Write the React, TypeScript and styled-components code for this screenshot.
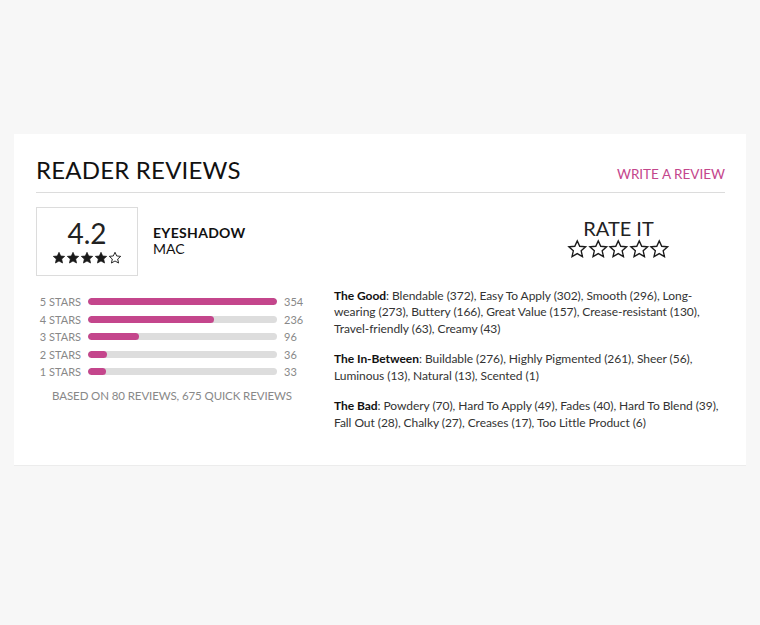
import styled, { createGlobalStyle } from 'styled-components'

const GlobalStyle = createGlobalStyle`
  html, body {
    margin: 0;
    padding: 0;
    background: #f7f7f7;
    font-family: Lato, "Liberation Sans", sans-serif;
  }
`

const Page = styled.div`
  width: 760px;
  height: 625px;
  padding-top: 134px;
  box-sizing: border-box;
`

const Card = styled.section`
  margin: 0 14px;
  background: #fff;
  border-bottom: 1px solid #ececec;
  padding: 22px 21px 36px 22px;
  height: 332px;
  box-sizing: border-box;
`

const Header = styled.div`
  display: flex;
  justify-content: space-between;
  align-items: flex-end;
  border-bottom: 1px solid #dcdcdc;
  padding-bottom: 8px;
`

const Title = styled.h2`
  margin: 0;
  font-size: 24px;
  font-weight: 400;
  color: #111;
  letter-spacing: 0.2px;
  line-height: 28px;
`

const WriteLink = styled.a`
  color: #c4468c;
  font-size: 13.5px;
  text-decoration: none;
  margin-bottom: 2px;
  cursor: pointer;
`

const Body = styled.div`
  display: grid;
  grid-template-columns: 276px 1fr;
  column-gap: 22px;
  padding-top: 14px;
`

const Summary = styled.div`
  display: flex;
  align-items: center;
  gap: 15px;
`

const ScoreBox = styled.div`
  width: 100px;
  height: 67px;
  border: 1px solid #dcdcdc;
  display: flex;
  flex-direction: column;
  align-items: center;
  justify-content: center;
  gap: 3px;
`

const Score = styled.div`
  font-size: 28px;
  line-height: 30px;
  color: #222;
  font-weight: 400;
`

const StarRow = styled.div<{ $gap?: number }>`
  display: flex;
  gap: ${p => p.$gap ?? 0}px;
`

const Product = styled.div`
  display: flex;
  flex-direction: column;
  font-size: 14px;
  line-height: 16px;
  color: #111;
  margin-top: -2px;
`

const ProductName = styled.span`
  font-weight: 700;
  letter-spacing: 0.3px;
`

const Bars = styled.div`
  display: flex;
  flex-direction: column;
  gap: 4px;
  margin-top: 19px;
`

const BarRow = styled.div`
  display: grid;
  grid-template-columns: 45px 189px 30px;
  column-gap: 7px;
  align-items: center;
  height: 13.5px;
  font-size: 11px;
  color: #888;
`

const BarLabel = styled.span`
  text-align: right;
`

const Track = styled.div`
  height: 7px;
  border-radius: 4px;
  background: #dddddd;
  overflow: hidden;
`

const Fill = styled.div`
  height: 100%;
  border-radius: 4px;
  background: #c4468c;
`

const Based = styled.div`
  margin-top: 10px;
  text-align: center;
  font-size: 11.5px;
  letter-spacing: -0.1px;
  color: #888;
  width: 272px;
`

const Right = styled.div`
  display: flex;
  flex-direction: column;
`

const RateIt = styled.div`
  align-self: center;
  display: flex;
  flex-direction: column;
  align-items: center;
  margin-top: 10px;
  margin-left: 178px;
`

const RateTitle = styled.div`
  font-size: 20px;
  line-height: 22px;
  color: #222;
`

const Attrs = styled.div`
  margin-top: 28px;
  display: flex;
  flex-direction: column;
  gap: 14px;
`

const Attr = styled.p`
  margin: 0;
  font-size: 12px;
  line-height: 16.5px;
  letter-spacing: -0.05px;
  color: #333;
`

const AttrLabel = styled.b`
  color: #111;
  font-weight: 700;
`

const STAR = 'M12 2.2l2.9 6.3 6.9.7-5.2 4.6 1.5 6.8L12 17.1l-6.1 3.5 1.5-6.8L2.2 9.2l6.9-.7z'

function Star({ size, filled }: { size: number; filled?: boolean }) {
  return (
    <svg width={size} height={size} viewBox="0 0 24 24">
      <path
        d={STAR}
        fill={filled ? '#1a1a1a' : 'none'}
        stroke="#1a1a1a"
        strokeWidth={filled ? 1.2 : 1.6}
        strokeLinejoin="miter"
      />
    </svg>
  )
}

const ratings = [
  { label: '5 STARS', count: 354 },
  { label: '4 STARS', count: 236 },
  { label: '3 STARS', count: 96 },
  { label: '2 STARS', count: 36 },
  { label: '1 STARS', count: 33 },
]

const attributes = [
  {
    label: 'The Good',
    text: 'Blendable (372), Easy To Apply (302), Smooth (296), Long-wearing (273), Buttery (166), Great Value (157), Crease-resistant (130), Travel-friendly (63), Creamy (43)',
  },
  {
    label: 'The In-Between',
    text: 'Buildable (276), Highly Pigmented (261), Sheer (56), Luminous (13), Natural (13), Scented (1)',
  },
  {
    label: 'The Bad',
    text: 'Powdery (70), Hard To Apply (49), Fades (40), Hard To Blend (39), Fall Out (28), Chalky (27), Creases (17), Too Little Product (6)',
  },
]

export default function App() {
  const max = Math.max(...ratings.map(r => r.count))
  return (
    <Page>
      <GlobalStyle />
      <Card>
        <Header>
          <Title>READER REVIEWS</Title>
          <WriteLink>WRITE A REVIEW</WriteLink>
        </Header>
        <Body>
          <div>
            <Summary>
              <ScoreBox>
                <Score>4.2</Score>
                <StarRow $gap={-1}>
                  {[0, 1, 2, 3, 4].map(i => (
                    <Star key={i} size={14} filled={i < 4} />
                  ))}
                </StarRow>
              </ScoreBox>
              <Product>
                <ProductName>EYESHADOW</ProductName>
                <span>MAC</span>
              </Product>
            </Summary>
            <Bars>
              {ratings.map(r => (
                <BarRow key={r.label}>
                  <BarLabel>{r.label}</BarLabel>
                  <Track>
                    <Fill style={{ width: `${(r.count / max) * 100}%` }} />
                  </Track>
                  <span>{r.count}</span>
                </BarRow>
              ))}
            </Bars>
            <Based>BASED ON 80 REVIEWS, 675 QUICK REVIEWS</Based>
          </div>
          <Right>
            <RateIt>
              <RateTitle>RATE IT</RateTitle>
              <StarRow>
                {[0, 1, 2, 3, 4].map(i => (
                  <Star key={i} size={20.5} />
                ))}
              </StarRow>
            </RateIt>
            <Attrs>
              {attributes.map(a => (
                <Attr key={a.label}>
                  <AttrLabel>{a.label}</AttrLabel>: {a.text}
                </Attr>
              ))}
            </Attrs>
          </Right>
        </Body>
      </Card>
    </Page>
  )
}
